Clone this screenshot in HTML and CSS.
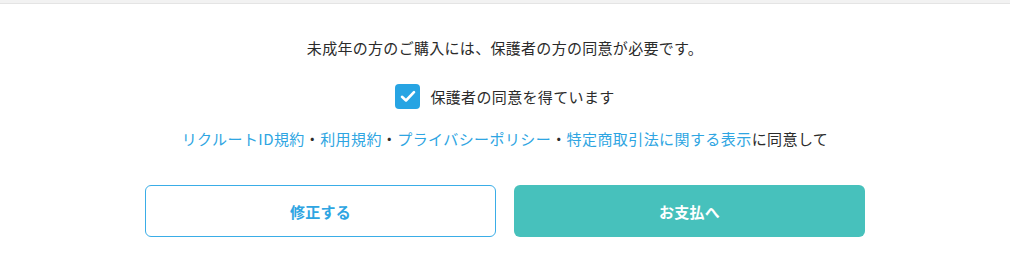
FILE: index.html
```html
<!DOCTYPE html>
<html lang="ja">
<head>
<meta charset="utf-8">
<link rel="stylesheet" href="styles.css">
</head>
<body>
<div class="topbar"></div>
<main class="page">
  <p class="notice">未成年の方のご購入には、保護者の方の同意が必要です。</p>
  <label class="check">
    <span class="box">
      <svg width="16" height="13" viewBox="0 0 16 13"><path d="M2 6.8 L6 10.5 L14 2.2" fill="none" stroke="#fff" stroke-width="2.6" stroke-linecap="round" stroke-linejoin="round"/></svg>
    </span>
    <span class="check-label">保護者の同意を得ています</span>
  </label>
  <p class="terms"><a>リクルートID規約</a>・<a>利用規約</a>・<a>プライバシーポリシー</a>・<a>特定商取引法に関する表示</a>に同意して</p>
  <div class="actions">
    <button class="btn btn-outline">修正する</button>
    <button class="btn btn-fill">お支払へ</button>
  </div>
</main>
</body>
</html>
```
FILE: styles.css
```css
html, body {
  margin: 0;
  padding: 0;
  background: #fff;
}
body {
  font-family: "Noto Sans CJK JP", "Noto Sans", sans-serif;
  color: #2b2b2b;
  width: 1010px;
}
.topbar {
  height: 3px;
  background: #f2f2f2;
  border-bottom: 1px solid #e4e4e4;
}
.page {
  display: flex;
  flex-direction: column;
  align-items: center;
}
.notice {
  margin: 33px 0 0;
  font-size: 15px;
  line-height: 22px;
  letter-spacing: 0.3px;
}
.check {
  margin-top: 25px;
  display: flex;
  align-items: center;
  gap: 10px;
}
.box {
  width: 25px;
  height: 25px;
  border-radius: 4px;
  background: #27a4e3;
  display: flex;
  align-items: center;
  justify-content: center;
}
.check-label {
  font-size: 15px;
  line-height: 22px;
  letter-spacing: 0.35px;
}
.terms {
  margin: 19px 0 0;
  font-size: 15px;
  line-height: 22px;
  letter-spacing: 0.42px;
}
.terms a {
  color: #2ea5e2;
}
.actions {
  margin-top: 35px;
  display: flex;
  gap: 18px;
}
.btn {
  width: 351px;
  height: 52px;
  border-radius: 6px;
  font-family: inherit;
  font-size: 15px;
  font-weight: bold;
  letter-spacing: 0.3px;
  cursor: pointer;
}
.btn-outline {
  background: #fff;
  border: 1.5px solid #3aade7;
  color: #2ea5e2;
}
.btn-fill {
  background: #47c1bc;
  border: none;
  color: #fff;
}
```
